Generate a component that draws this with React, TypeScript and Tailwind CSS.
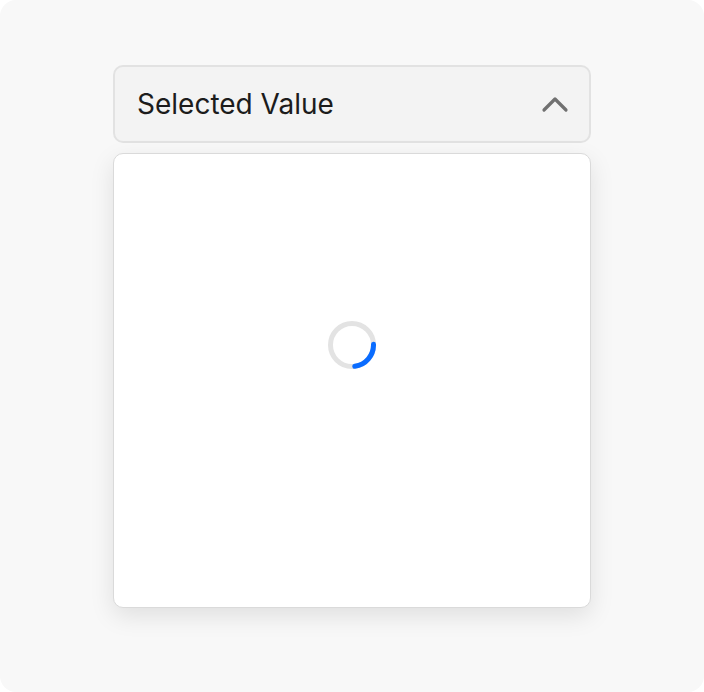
import React from "react";

export default function App() {
  return (
    <div className="w-[704px] h-[692px] bg-white">
      <div
        className="w-[704px] h-[692px] rounded-[16px] bg-[#f8f8f8] pt-[65px] pl-[113px]"
        style={{ fontFamily: "Inter, 'Noto Sans', sans-serif" }}
      >
        <div className="w-[478px] flex flex-col gap-[10px]">
          <div className="h-[78px] rounded-[10px] border-2 border-[#e2e2e2] bg-[#f3f3f3] flex items-center justify-between pl-[22px] pr-[20px]">
            <span className="text-[28px] leading-none text-[#1c1c1c] tracking-[0px]">Selected Value</span>
            <svg width="28" height="20" viewBox="0 0 28 20" fill="none">
              <path d="M3 16 L14 5 L25 16" stroke="#707070" strokeWidth="3.2" strokeLinecap="round" strokeLinejoin="round" />
            </svg>
          </div>
          <div className="h-[455px] rounded-[10px] border border-[#dadada] bg-white shadow-[0_8px_24px_rgba(0,0,0,0.10)] flex items-center justify-center">
            <svg width="48" height="48" viewBox="0 0 48 48" className="mt-[-72px]">
              <circle cx="24" cy="24" r="21.5" stroke="#e3e3e3" strokeWidth="5" fill="none" />
              <circle
                cx="24"
                cy="24"
                r="21.5"
                stroke="#0a6cff"
                strokeWidth="5"
                fill="none"
                strokeLinecap="round"
                strokeDasharray={`${(Math.PI * 2 * 21.5) / 4.3} ${Math.PI * 2 * 21.5}`}
                transform="rotate(-2 24 24)"
              />
            </svg>
          </div>
        </div>
      </div>
    </div>
  );
}
